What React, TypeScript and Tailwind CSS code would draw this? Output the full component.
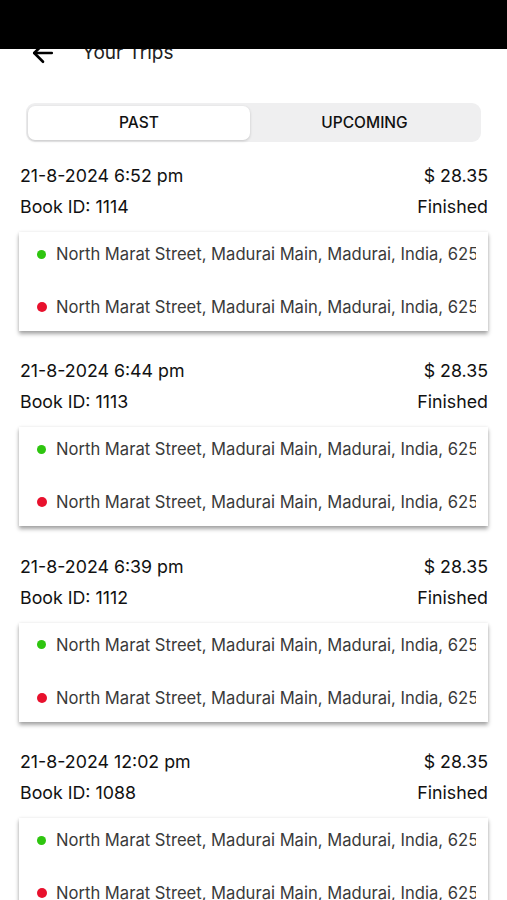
import { ArrowLeft } from 'lucide-react'

const trips = [
  { date: '21-8-2024 6:52 pm', id: '1114', price: '$ 28.35', status: 'Finished' },
  { date: '21-8-2024 6:44 pm', id: '1113', price: '$ 28.35', status: 'Finished' },
  { date: '21-8-2024 6:39 pm', id: '1112', price: '$ 28.35', status: 'Finished' },
  { date: '21-8-2024 12:02 pm', id: '1088', price: '$ 28.35', status: 'Finished' },
]

const address = 'North Marat Street, Madurai Main, Madurai, India, 625'

function TripItem({ trip }: { trip: (typeof trips)[number] }) {
  return (
    <div className="mb-[27.4px]">
      <div className="flex items-center justify-between pl-5 pr-[19px] text-[17.8px] leading-[26px] text-[#111]">
        <span>{trip.date}</span>
        <span>{trip.price}</span>
      </div>
      <div className="mt-[5px] flex items-center justify-between pl-5 pr-[19px] text-[17.8px] leading-[26px] text-[#111]">
        <span>Book ID: {trip.id}</span>
        <span>{trip.status}</span>
      </div>
      <div className="mx-[19px] mt-3 flex flex-col gap-[29px] overflow-hidden bg-white pb-3 pl-[18px] pr-3 pt-[10px] shadow-[0_3px_4px_rgba(0,0,0,0.35),0_0_3px_rgba(0,0,0,0.08)]">
        <div className="flex items-center">
          <span className="h-[9px] w-[9px] shrink-0 rounded-full bg-[#2ec50f]" />
          <span className="ml-[10px] overflow-hidden whitespace-nowrap text-[16.6px] leading-6 text-[#3a3a3a]">
            {address}
          </span>
        </div>
        <div className="flex items-center">
          <span className="h-[10px] w-[10px] shrink-0 rounded-full bg-[#e8112d]" />
          <span className="ml-[9px] overflow-hidden whitespace-nowrap text-[16.6px] leading-6 text-[#3a3a3a]">
            {address}
          </span>
        </div>
      </div>
    </div>
  )
}

export default function App() {
  return (
    <div className="relative h-[900px] w-[507px] overflow-hidden bg-white" style={{ fontFamily: 'Inter, "Noto Sans", sans-serif' }}>
      <div className="absolute left-0 right-0 top-0 z-10 h-[49px] bg-black" />
      <div className="mt-[36px] flex h-[34px] items-center pl-[28px]">
        <ArrowLeft size={30} strokeWidth={2.1} className="text-black" />
        <span className="ml-[24px] text-[19px] text-[#222]">Your Trips</span>
      </div>
      <div className="mx-[26px] mt-[33px] flex h-[39px] items-center rounded-[9px] bg-[#efeff0] p-[2px]">
        <div className="flex h-[34px] w-[222px] items-center justify-center rounded-[7px] bg-white text-[15.5px] font-medium text-[#111] shadow-[0_1px_3px_rgba(0,0,0,0.18)]">
          PAST
        </div>
        <div className="flex h-[34px] flex-1 items-center justify-center text-[15.5px] font-medium text-[#111]">
          UPCOMING
        </div>
      </div>
      <div className="mt-[21px]">
        {trips.map((t) => (
          <TripItem key={t.id} trip={t} />
        ))}
      </div>
    </div>
  )
}
